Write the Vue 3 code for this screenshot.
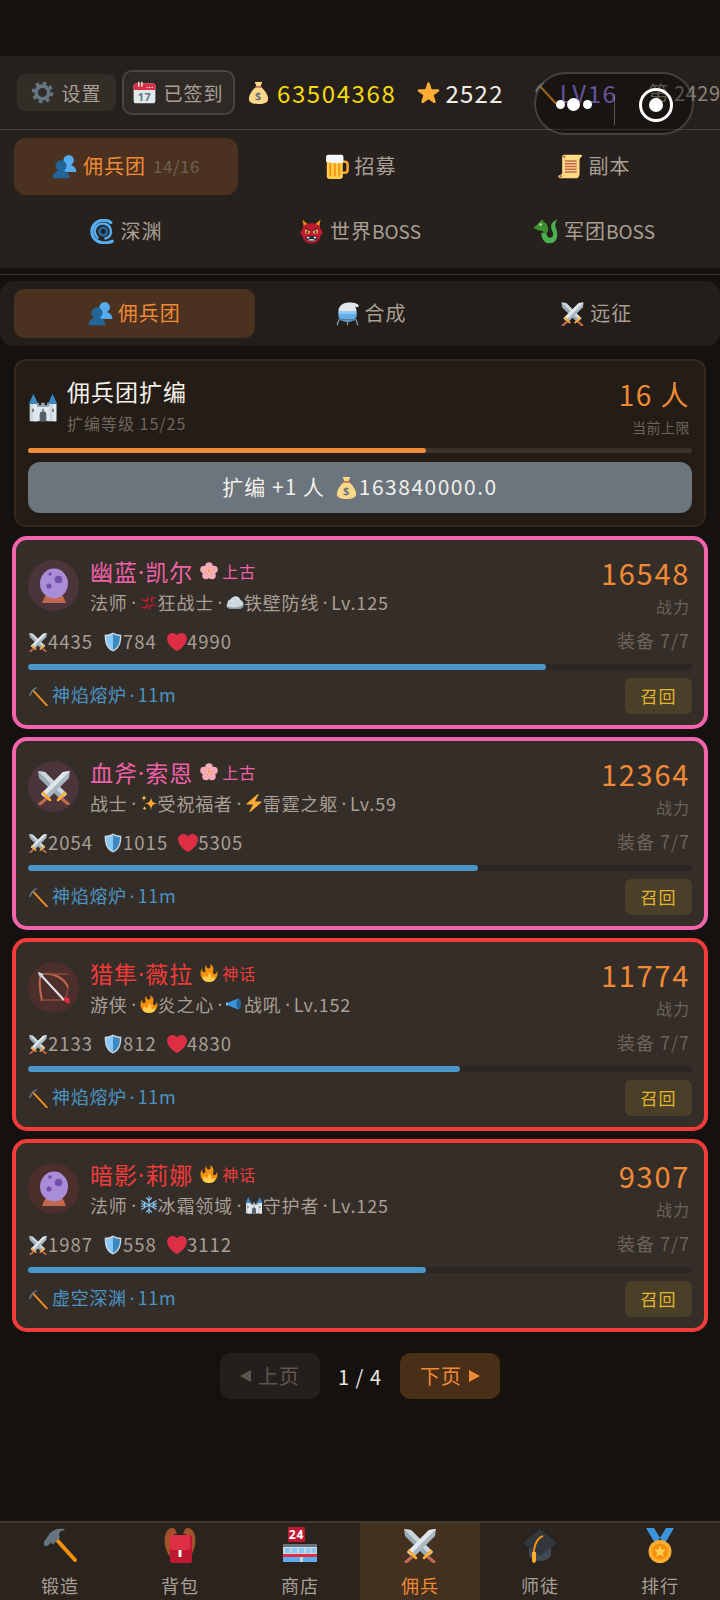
<script setup>
const navTabs = [
  { icon: 'bust', text: '佣兵团', extra: '14/16', active: true },
  { icon: 'beer', text: '招募' },
  { icon: 'scroll', text: '副本' },
  { icon: 'cyclone', text: '深渊' },
  { icon: 'ogre', text: '世界', latin: 'BOSS' },
  { icon: 'dragon', text: '军团', latin: 'BOSS' }
]
const subTabs = [
  { icon: 'bust', text: '佣兵团', active: true },
  { icon: 'flask', text: '合成' },
  { icon: 'swords', text: '远征' }
]
const heroes = [
  { name: '幽蓝·凯尔', tier: 'pink', rarityIcon: 'sakura', rarity: '上古', avatar: 'ball', job: '法师', traits: [['anger', '狂战士'], ['rock', '铁壁防线']], lv: 'Lv.125', power: 16548, atk: 4435, def: 784, hp: 4990, pct: 78, place: '神焰熔炉' },
  { name: '血斧·索恩', tier: 'pink', rarityIcon: 'sakura', rarity: '上古', avatar: 'swords', job: '战士', traits: [['sparkles', '受祝福者'], ['bolt', '雷霆之躯']], lv: 'Lv.59', power: 12364, atk: 2054, def: 1015, hp: 5305, pct: 67.8, place: '神焰熔炉' },
  { name: '猎隼·薇拉', tier: 'red', rarityIcon: 'fire', rarity: '神话', avatar: 'bow', job: '游侠', traits: [['fire', '炎之心'], ['horn', '战吼']], lv: 'Lv.152', power: 11774, atk: 2133, def: 812, hp: 4830, pct: 65, place: '神焰熔炉' },
  { name: '暗影·莉娜', tier: 'red', rarityIcon: 'fire', rarity: '神话', avatar: 'ball', job: '法师', traits: [['snow', '冰霜领域'], ['castle', '守护者']], lv: 'Lv.125', power: 9307, atk: 1987, def: 558, hp: 3112, pct: 60, place: '虚空深渊' }
]
const bottomTabs = [
  { icon: 'hammer', text: '锻造' },
  { icon: 'pack', text: '背包' },
  { icon: 'store', text: '商店' },
  { icon: 'swords', text: '佣兵', active: true },
  { icon: 'cap', text: '师徒' },
  { icon: 'medal', text: '排行' }
]
</script>

<template>
  <div class="app">
    <svg class="sprite" width="0" height="0" aria-hidden="true">
      <defs>
        <g id="gear">
          <circle cx="18" cy="18" r="10" fill="none" stroke="#66757F" stroke-width="6" />
          <circle cx="18" cy="18" r="14.5" fill="none" stroke="#66757F" stroke-width="5" stroke-dasharray="5.6 5.79" />
        </g>
        <g id="calendar">
          <rect x="1" y="4" width="34" height="31" rx="4" fill="#E1E8ED" />
          <path d="M1 14V8a4 4 0 0 1 4-4h26a4 4 0 0 1 4 4v6z" fill="#DD2E44" />
          <path d="M9 1v8M14 1v8" stroke="#F5F8FA" stroke-width="2" />
          <path d="M21 10h2m2 0h2m2 0h2" stroke="#F5F8FA" stroke-width="1.6" />
          <text x="18" y="32" font-size="17" text-anchor="middle" fill="#66757F" font-family="Noto Sans, sans-serif" font-weight="700">17</text>
        </g>
        <g id="money">
          <path d="M18 7C10 11 3 21 3 28c0 5 5 8 15 8s15-3 15-8c0-7-7-17-15-21z" fill="#FDD888" />
          <path d="M12 1c2 1.500 4 0 6 0s4 1.500 6 0l-2.500 7h-7z" fill="#FDD888" />
          <path d="M13 8h10v2.500H13z" fill="#BF6952" />
          <text x="18" y="30" font-size="17" text-anchor="middle" fill="#67757F" font-family="Noto Sans, sans-serif" font-weight="700">$</text>
        </g>
        <path id="star" fill="#FFAC33" d="M27.287 34.627c-.404 0-.806-.124-1.152-.371L18 28.422l-8.135 5.834c-.693.496-1.623.496-2.312-.008-.689-.499-.979-1.385-.721-2.194l3.034-9.792-8.062-5.681c-.685-.505-.97-1.393-.708-2.203.264-.808 1.016-1.357 1.866-1.363L12.947 13l3.179-9.549c.268-.809 1.023-1.353 1.874-1.353.851 0 1.606.545 1.875 1.353L23 13l10.036.015c.853.006 1.606.556 1.867 1.363.263.81-.022 1.698-.708 2.203l-8.062 5.681 3.034 9.792c.26.809-.033 1.695-.72 2.194-.347.254-.753.379-1.16.379z" />
        <g id="pick">
          <path d="M9 8l25 27" stroke="#F19020" stroke-width="3.400" stroke-linecap="round" />
          <path d="M2 17C4 10 8 5 15 2c1 0 1.500 1 1 2C11 7 7 11 5 17c-.5 1.500-3 1.500-3 0z" fill="#66757F" />
        </g>
        <g id="bust">
          <circle cx="24" cy="9" r="7.500" fill="#55ACEE" />
          <path d="M14 26c0-7 4-9 7-10h6c3 1 8 3 8 10z" fill="#55ACEE" />
          <circle cx="13" cy="17" r="8" fill="#226699" />
          <path d="M1 35c0-8 5-10 8-11h8c3 1 8 3 8 11z" fill="#226699" />
        </g>
        <g id="beer">
          <path d="M26 11h4a4 4 0 0 1 4 4v8a4 4 0 0 1-4 4h-4" fill="none" stroke="#FFAC33" stroke-width="3.500" />
          <path d="M4 8h23v24a4 4 0 0 1-4 4H8a4 4 0 0 1-4-4z" fill="#FFCC4D" />
          <path d="M9 14v17M15.500 14v17M22 14v17" stroke="#F4900C" stroke-width="2.500" stroke-linecap="round" />
          <path d="M3 4a3 3 0 0 1 3-3h19a3 3 0 0 1 3 3v7c0 1.500-2 2-3 1-1 2-3 2-4 0-2 2-5 2-6 0-2 2-5 1-6 0H6c-2 0-3-1-3-2z" fill="#F5F8FA" />
        </g>
        <g id="scroll">
          <path d="M9 1h24c2 0 2 2 1 3-2 1-3 3-3 5v20c0 4-3 6-6 6H4c-3 0-4-2-3-4 1-1 4-1 5-3V7c0-4 0-6 3-6z" fill="#FFD983" />
          <circle cx="9" cy="4" r="1.800" fill="#BF6952" />
          <circle cx="4" cy="32" r="1.800" fill="#BF6952" />
          <path d="M10 10h17M10 14h17M10 18h17M10 22h17M10 26h17" stroke="#C1694F" stroke-width="2" />
        </g>
        <g id="cyclone" fill="none" stroke-linecap="round">
          <path d="M30 5C25 1 15 0 8 6 1 12 1 23 7 29c6 6 16 7 25 3" stroke="#55ACEE" stroke-width="4.500" />
          <path d="M11 27c-5-5-6-14 0-18 6-4 15-3 18 4 3 7 0 14-7 15" stroke="#55ACEE" stroke-width="3.500" />
          <circle cx="19" cy="18" r="5.500" stroke="#226699" stroke-width="4" />
        </g>
        <g id="ogre">
          <path d="M7 12L5 1l8 7zM29 12l2-11-8 7z" fill="#F4900C" />
          <path d="M5 15c0-6 6-9 13-9s13 3 13 9c2 1 3 3 3 5s-2 3-3 3c0 7-5 12-13 12S5 30 5 23c-1 0-3-1-3-3s1-4 3-5z" fill="#BE1931" />
          <path d="M9 15l7 3-1 3H9zM27 15l-7 3 1 3h6z" fill="#FFCC4D" />
          <circle cx="12" cy="19" r="1.600" fill="#292F33" /><circle cx="24" cy="19" r="1.600" fill="#292F33" />
          <path d="M9 13l7 3M27 13l-7 3" stroke="#60352A" stroke-width="2" />
          <path d="M9 27c2-2 5-3 9-3s7 1 9 3c-1 4-5 5-9 5s-8-1-9-5z" fill="#292F33" />
          <path d="M11 26l2 3 2-3.500zM25 26l-2 3-2-3.500z M13 31h10l-2-2h-6z" fill="#F5F8FA" />
        </g>
        <g id="dragon">
          <path d="M12 20c0 6 3 15 12 15 8 0 11-6 11-13 0-6-3-9-3-13 0-3 1-5 3-8-5 1-9 5-9 10 0 5 3 7 3 11 0 3-2 5-5 5-3 0-4-3-5-8z" fill="#4CAF50" />
          <path d="M1 11c4 0 5-4 8-6 2-2 3-3 5-5l1 4c3 1 5 3 6 6 1 3 1 6 0 9l-4 2c-2-2-3-4-5-4-3 0-4-1-7-2-2 0-3-2-4-4z" fill="#3E8E2F" />
          <circle cx="11" cy="8" r="1.800" fill="#C6E5B3" />
        </g>
        <g id="flask">
          <path d="M6 26l-3 9M30 26l3 9M18 27v8" stroke="#8899A6" stroke-width="1.800" />
          <path d="M5 15h26v7a11 7 0 0 1-26 0z" fill="#5DADEC" />
          <path d="M5 15h26v4H5z" fill="#88C9F9" />
          <path d="M5 15c0-8 6-13 14-13 6 0 12 0 15 4 1 2-1 3-3 3l-2-1c1 2 2 4 2 7z" fill="#E1E8ED" />
          <path d="M5 27h26" stroke="#66757F" stroke-width="2" />
        </g>
        <g id="swords">
          <path d="M2 2l7 1 22 22-6 6L3 9z" fill="#99AAB5" />
          <path d="M2 2l7 1 22 22-3 3z" fill="#CCD6DD" />
          <path d="M34 2l-7 1L5 25l6 6L33 9z" fill="#AAB8C2" />
          <path d="M34 2l-7 1L5 25l3 3z" fill="#E1E8ED" />
          <path d="M25 29l7 6M11 29l-7 6" stroke="#C1694F" stroke-width="3.200" stroke-linecap="round" />
          <path d="M22 31l7-7M14 31l-7-7" stroke="#FFAC33" stroke-width="2.600" stroke-linecap="round" />
        </g>
        <g id="shield">
          <path d="M18 1C13 4 8 5 3 5c0 13 2 25 15 30 13-5 15-17 15-30-5 0-10-1-15-4z" fill="#CCD6DD" />
          <path d="M18 3.500C14 6 9.500 7 5.500 7.200 5.500 18 8 28 18 32.400z" fill="#88C9F9" />
          <path d="M18 3.500C22 6 26.500 7 30.500 7.200 30.500 18 28 28 18 32.400z" fill="#3B88C3" />
        </g>
        <path id="heart" fill="#DD2E44" d="M35.885 11.833c0-5.450-4.418-9.868-9.867-9.868-3.308 0-6.227 1.633-8.018 4.129-1.791-2.496-4.710-4.129-8.017-4.129-5.450 0-9.868 4.417-9.868 9.868 0 .772.098 1.520.266 2.241C1.751 22.587 11.216 31.568 18 34.034c6.783-2.466 16.249-11.447 17.617-19.959.170-.721.268-1.469.268-2.242z" />
        <g id="castle">
          <path d="M2 14h9v21H2zM25 14h9v21h-9z" fill="#CCD6DD" />
          <path d="M6 14h5v21H6zM29.500 14H34v21h-4.500z" fill="#E1E8ED" />
          <path d="M10 17h16v18H10z" fill="#E1E8ED" />
          <path d="M1 14L6.500 2 12 14zM24 14l5.500-12L35 14z" fill="#3B88C3" />
          <path d="M11 13h2v3h3v-3h4v3h3v-3h2v5H11z" fill="#99AAB5" />
          <path d="M14 35V27a4 4 0 0 1 8 0v8z" fill="#55606B" />
          <path d="M5 20h2v4H5zM29 20h2v4h-2zM17 20h2v3h-2z" fill="#66757F" />
        </g>
        <g id="ball">
          <path d="M9 28h18l3 7H6z" fill="#C1694F" />
          <ellipse cx="18" cy="15.500" rx="14" ry="15" fill="#AA8DD8" />
          <circle cx="22.500" cy="11.500" r="3.800" fill="#744EAA" />
          <circle cx="13" cy="18" r="2.600" fill="#744EAA" />
          <circle cx="14" cy="6" r="1.800" fill="#744EAA" />
        </g>
        <g id="bow" fill="none">
          <path d="M8 4c10-1 20 4 24 13M4 8c-1 8 1 18 2 23" stroke="#C1694F" stroke-width="2" />
          <path d="M8 4h24v0M32 17c-1 7-2 11-3 13H6" stroke="#8F4B38" stroke-width="1.600" />
          <path d="M3 3l25 27" stroke="#E1E8ED" stroke-width="2" />
          <path d="M2 2l6 2-4 4z" fill="#CCD6DD" />
          <path d="M27 27l6 1 1 6-5-2z" fill="#DD2E44" />
        </g>
        <g id="sakura" fill="#F4ABBA">
          <circle cx="18" cy="8" r="7.500" /><circle cx="28" cy="15" r="7.500" /><circle cx="24" cy="27" r="7.500" /><circle cx="12" cy="27" r="7.500" /><circle cx="8" cy="15" r="7.500" />
          <circle cx="18" cy="18" r="5" fill="#FFD983" />
          <path d="M18 18v-7M18 18l6-2M18 18l4 6M18 18l-4 6M18 18l-6-2" stroke="#EA596E" stroke-width="1" />
        </g>
        <g id="fire">
          <path fill="#F4900C" d="M35 19c0-2.062-.367-4.039-1.040-5.868-.460 5.389-3.333 8.157-6.335 6.868-2.812-1.208-.917-5.917-.777-8.164.236-3.809-.012-8.169-6.931-11.794 2.875 5.500.333 8.917-2.333 9.125-2.958.231-5.667-2.542-4.667-7.042-3.238 2.386-3.332 6.402-2.333 9 1.042 2.708-.042 4.958-2.583 5.208-2.840.280-4.418-3.041-2.963-8.333C2.520 10.965 1 14.805 1 19c0 9.389 7.611 17 17 17s17-7.611 17-17z" />
          <path fill="#FFCC4D" d="M28.394 23.999c.148 3.084-2.561 4.293-4.019 3.709-2.106-.843-1.541-2.291-2.083-5.291s-2.625-5.083-5.708-6c2.250 6.333-1.247 8.667-3.080 9.084-1.872.426-3.753-.001-3.968-4.007C7.352 23.668 6 26.676 6 30c0 .340.019.675.047 1.007C9.020 34.667 13.584 36 18 36s8.979-1.333 11.953-4.993c.028-.332.047-.667.047-1.007 0-2.106-.541-4.083-1.606-6.001z" />
        </g>
        <g id="anger" fill="#BE1931">
          <path d="M14 1c2 6 1 10-1 12-2 1-7 0-11-3 4 6 6 8 11 8 4-1 6-7 1-17z" />
          <path d="M35 10c-6 0-9 1-10 3s0 5 3 9c-5-3-8-6-7-10 1-4 7-6 14-2z" />
          <path d="M34 27c-6-2-10-2-12 0s-2 5-1 9c-4-5-4-9-2-11 3-3 9-3 15 2z" />
          <path d="M1 28c5 0 9 0 11-2s2-4 2-8c3 4 3 8 1 11-3 3-8 4-14-1z" />
        </g>
        <g id="rock">
          <path d="M4 30c-3-2-4-7-1-10 0-4 3-7 6-7 2-5 8-8 13-6 4 1 6 4 7 7 4 1 6 5 6 9 0 5-3 8-7 8H9c-2 0-4 0-5-1z" fill="#CCD6DD" />
          <path d="M3 26c6 4 22 5 31-2 0 5-3 8-7 8H8c-2 0-4-3-5-6z" fill="#8899A6" />
          <path d="M10 14c3 0 5 1 6 3M20 9c2 1 4 3 4 6" stroke="#F5F8FA" stroke-width="2" fill="none" />
        </g>
        <g id="sparkles" fill="#FFAC33">
          <path d="M22 6c1 9 4 12 13 13-9 1-12 4-13 14-1-10-4-13-13-14 9-1 12-4 13-13z" />
          <path d="M8 2c.5 4 2 5.500 6 6-4 .5-5.500 2-6 6-.5-4-2-5.500-6-6 4-.5 5.500-2 6-6z" fill="#FFCC4D" />
          <path d="M9 24c.4 3 1.500 4 4.500 4.500-3 .5-4 1.500-4.500 4.500-.5-3-1.500-4-4.500-4.500 3-.5 4-1.500 4.500-4.500z" fill="#FFCC4D" />
        </g>
        <path id="bolt" fill="#FFAC33" d="M32.938 15.651C32.792 15.260 32.418 15 32 15H19.925L26.890 1.458c.219-.426.106-.947-.271-1.245C26.437.071 26.218 0 26 0c-.233 0-.466.082-.653.243L18 6.588 3.347 19.243c-.316.273-.430.714-.284 1.105S3.582 21 4 21h12.075L9.110 34.542c-.219.426-.106.947.271 1.245.182.142.401.213.619.213.233 0 .466-.082.653-.243L18 29.412l14.653-12.655c.317-.273.430-.714.285-1.106z" />
        <g id="horn">
          <path d="M2 16l22-9v22L2 20z" fill="#3B94D9" />
          <path d="M24 7c4 0 6 5 6 11s-2 11-6 11c-2-3-3-7-3-11s1-8 3-11z" fill="#226699" />
          <path d="M0 15h3v6H0z" fill="#88C9F9" />
        </g>
        <g id="snow" stroke="#88C9F9" stroke-width="2.200" stroke-linecap="round" fill="none">
          <path d="M18 1v34M3.300 9.500l29.400 17M3.300 26.500l29.400-17" />
          <path d="M13 4l5 5 5-5M13 32l5-5 5 5M3 15l7 3-2 6M33 15l-7 3 2 6M3 21l7-3-2-6M33 21l-7-3 2-6" />
        </g>
        <g id="hammer">
          <path d="M14 12l19 21" stroke="#F4900C" stroke-width="4" stroke-linecap="round" />
          <path d="M2 15l6-9c4-4 9-5 14-4 1 .5.500 1.500 0 1.500-3 0-5 2-5 5l1 2-7 7-2-2-3 3c-1 1-3 1-4-.5z" fill="#66757F" />
        </g>
        <g id="pack">
          <path d="M8 30C2 22 1 10 5 4c2-3 6-4 8-2l2 5H12C9 10 10 22 12 30zM28 30c6-8 7-20 3-26-2-3-6-4-8-2l-2 5h3c3 3 2 15 0 23z" fill="#A0522D" />
          <path d="M8 8h20a2 2 0 0 1 2 2v24a2 2 0 0 1-2 2H10a2 2 0 0 1-2-2z" fill="#BE1931" />
          <path d="M8 8h20v12a3 3 0 0 1-3 3H11a3 3 0 0 1-3-3z" fill="#DD2E44" />
          <path d="M16.500 23h3v7h-3z" fill="#F5F8FA" />
        </g>
        <g id="store">
          <rect x="6" y="0" width="17" height="15" rx="1" fill="#BE1931" />
          <text x="14.500" y="12" font-size="12" text-anchor="middle" fill="#fff" font-weight="700" font-family="Noto Sans, sans-serif">24</text>
          <path d="M1 17h34v18H1z" fill="#CCD6DD" />
          <path d="M1 17h34v3H1z" fill="#66757F" />
          <path d="M3 21h5v5H3zM10 21h5v5h-5zM17 21h5v5h-5zM24 21h4v5h-4zM29.500 21H34v5h-4.500z" fill="#88C9F9" />
          <path d="M1 27h34v3H1z" fill="#DD2E44" />
          <path d="M1 30h17v5H1zM21 30h14v5H21z" fill="#5DADEC" />
        </g>
        <g id="cap">
          <path d="M7 19l11 6 11-6v10c-2 3-7 5-11 5s-9-2-11-5z" fill="#3F4A54" />
          <path d="M18 2l17 14-17 13L1 16z" fill="#31373D" />
          <path d="M21 9c-4 1-8 6-9 14v7" fill="none" stroke="#F4900C" stroke-width="2" />
          <path d="M10 25h4v8c0 2-1 3-2 3s-2-1-2-3z" fill="#FFAC33" />
        </g>
        <g id="medal">
          <path d="M4 1h8l8 13-6 4zM32 1h-8l-8 13 6 4z" fill="#3B94D9" />
          <path d="M14 14h8l2 5H12z" fill="#FFAC33" />
          <circle cx="18" cy="24.500" r="11.500" fill="#FFAC33" />
          <circle cx="18" cy="24.500" r="8" fill="#F4900C" />
          <path d="M18 18.500l1.800 4 4.200.3-3.200 2.700 1 4.200-3.800-2.200-3.800 2.200 1-4.200-3.200-2.700 4.200-.3z" fill="#FFCC4D" />
        </g>
      </defs>
    </svg>

    <header class="top">
      <div class="tool"><svg class="ic i23" viewBox="0 0 36 36"><use href="#gear" /></svg>设置</div>
      <div class="tool signed"><svg class="ic i23" viewBox="0 0 36 36"><use href="#calendar" /></svg>已签到</div>
      <div class="stat money"><svg class="ic i23" viewBox="0 0 36 36"><use href="#money" /></svg><span class="gold">63504368</span></div>
      <div class="stat stars"><svg class="ic i23" viewBox="0 0 36 36"><use href="#star" /></svg><span class="white">2522</span></div>
      <div class="stat lvl"><svg class="ic i23" viewBox="0 0 36 36"><use href="#pick" /></svg><span class="purple">LV16</span></div>
      <div class="stat rank"><span class="grey">第</span><span class="grey">2429</span></div>
    </header>

    <div class="capsule">
      <span class="dot"></span><span class="dot big"></span><span class="dot"></span>
      <span class="divider"></span>
      <span class="target"><span class="core"></span></span>
    </div>

    <nav class="nav">
      <div v-for="t in navTabs" :key="t.text" class="nav-tab" :class="{ on: t.active }">
        <svg class="ic i25" viewBox="0 0 36 36"><use :href="'#' + t.icon" /></svg>
        <span class="lift">{{ t.text }}<b v-if="t.latin" class="latin">{{ t.latin }}</b></span>
        <span v-if="t.extra" class="extra lift">{{ t.extra }}</span>
      </div>
    </nav>

    <div class="sub-wrap">
      <div class="sub">
        <div v-for="t in subTabs" :key="t.text" class="sub-tab" :class="{ on: t.active }">
          <svg class="ic i25" viewBox="0 0 36 36"><use :href="'#' + t.icon" /></svg>
          <span class="lift">{{ t.text }}</span>
        </div>
      </div>
    </div>

    <section class="expand">
      <div class="ex-head">
        <svg class="ic i30" viewBox="0 0 36 36"><use href="#castle" /></svg>
        <div class="ex-info">
          <div class="ex-title">佣兵团扩编</div>
          <div class="ex-sub">扩编等级 15/25</div>
        </div>
        <div class="ex-right">
          <div class="ex-num">16 人</div>
          <div class="ex-cap">当前上限</div>
        </div>
      </div>
      <div class="ex-bar"><div class="ex-fill"></div></div>
      <div class="ex-btn"><span class="lift2 lead">扩编 +1 人 </span><svg class="ic i23" viewBox="0 0 36 36"><use href="#money" /></svg><span class="lift2 cost">163840000.0</span></div>
    </section>

    <section class="list">
      <article v-for="h in heroes" :key="h.name" class="hero" :class="h.tier">
        <div class="head">
          <div class="avatar"><svg class="ic i36" viewBox="0 0 36 36"><use :href="'#' + h.avatar" /></svg></div>
          <div class="info">
            <div class="name-row">
              <span class="name">{{ h.name.split('·')[0] }}<i class="ndot">·</i>{{ h.name.split('·')[1] }}</span>
              <svg class="ic i18 rar-ic" viewBox="0 0 36 36"><use :href="'#' + h.rarityIcon" /></svg>
              <span class="rarity">{{ h.rarity }}</span>
            </div>
            <div class="desc">
              <span>{{ h.job }}</span><i class="sep">·</i>
              <template v-for="tr in h.traits" :key="tr[1]">
                <svg class="ic i18" viewBox="0 0 36 36"><use :href="'#' + tr[0]" /></svg><span>{{ tr[1] }}</span><i class="sep">·</i>
              </template>
              <span>{{ h.lv }}</span>
            </div>
          </div>
          <div class="power">
            <div class="p-num">{{ h.power }}</div>
            <div class="p-lab">战力</div>
          </div>
        </div>
        <div class="stats">
          <svg class="ic i20" viewBox="0 0 36 36"><use href="#swords" /></svg><span class="lift">{{ h.atk }}</span>
          <svg class="ic i20 gapl" viewBox="0 0 36 36"><use href="#shield" /></svg><span class="lift">{{ h.def }}</span>
          <svg class="ic i20 gapl" viewBox="0 0 36 36"><use href="#heart" /></svg><span class="lift">{{ h.hp }}</span>
          <span class="gear lift2">装备 7/7</span>
        </div>
        <div class="bar"><div class="fill" :style="{ width: h.pct + '%' }"></div></div>
        <div class="foot">
          <svg class="ic i20" viewBox="0 0 36 36"><use href="#pick" /></svg>
          <span class="place lift2">{{ h.place }}<i class="sep2">·</i>11m</span>
          <div class="recall"><span class="lift">召回</span></div>
        </div>
      </article>
    </section>

    <div class="pager">
      <div class="pg prev"><span class="tri left"></span><span class="lift">上页</span></div>
      <div class="pg-num"><span class="lift">1 / 4</span></div>
      <div class="pg next"><span class="lift">下页</span><span class="tri right"></span></div>
    </div>

    <footer class="bottom">
      <div v-for="t in bottomTabs" :key="t.text" class="b-tab" :class="{ on: t.active }">
        <svg class="ic i36" viewBox="0 0 36 36"><use :href="'#' + t.icon" /></svg>
        <span>{{ t.text }}</span>
      </div>
    </footer>
  </div>
</template>

<style scoped>
.app, .app * { box-sizing: border-box; }
.app {
  position: relative;
  width: 720px;
  height: 1600px;
  padding-top: 56px;
  display: flex;
  flex-direction: column;
  overflow: hidden;
  background: #14110e;
  font-family: "Noto Sans CJK SC", "Noto Sans", sans-serif;
  letter-spacing: 1px;
  color: #a89f95;
}
.sprite { position: absolute; }
.ic { display: block; flex: none; }
.i18 { width: 18px; height: 18px; }
.i20 { width: 20px; height: 20px; }
.i23 { width: 23px; height: 23px; }
.i25 { width: 25px; height: 25px; }
.i30 { width: 30px; height: 30px; }
.i36 { width: 36px; height: 36px; }
.lift { padding-bottom: 2px; }
.lift2 { padding-bottom: 4px; }

.top {
  height: 74px;
  flex: none;
  display: flex;
  align-items: center;
  padding-left: 17px;
  background: #26201c;
  border-bottom: 1px solid #4a443e;
  overflow: hidden;
  white-space: nowrap;
}
.tool {
  flex: none;
  height: 37px;
  width: 99px;
  display: flex;
  align-items: center;
  justify-content: center;
  gap: 7px;
  font-size: 19px;
  border-radius: 8px;
  background: #332d28;
}
.signed {
  width: 113px;
  height: 45px;
  margin-left: 6px;
  background: #2f2925;
  border: 2px solid #4a443e;
  border-radius: 10px;
}
.stat { flex: none; display: flex; align-items: center; font-size: 24px; }
.money { margin-left: 12px; gap: 7px; letter-spacing: 1.600px; }
.stars { margin-left: 21px; gap: 5px; letter-spacing: 1.300px; }
.lvl { margin-left: 30px; gap: 3px; letter-spacing: 1.500px; }
.rank { margin-left: 31px; gap: 5px; font-size: 20px; letter-spacing: .6px; }
.gold { color: #f5d90a; }
.white { color: #f0ece6; }
.purple { color: #9b7fe8; }
.grey { color: #8d857b; }

.capsule {
  position: absolute;
  left: 534px;
  top: 72px;
  width: 160px;
  height: 63px;
  border-radius: 32px;
  background: rgba(0, 0, 0, 0.35);
  border: 2px solid rgba(255, 255, 255, 0.18);
}
.dot {
  position: absolute;
  left: 20px;
  top: 26px;
  width: 9px;
  height: 9px;
  border-radius: 50%;
  background: #fff;
}
.dot.big { left: 31px; top: 24px; width: 13px; height: 13px; }
.dot + .dot + .dot { left: 47px; }
.divider {
  position: absolute;
  left: 78px;
  top: 20px;
  width: 1px;
  height: 31px;
  background: rgba(255, 255, 255, 0.3);
}
.target {
  position: absolute;
  left: 103px;
  top: 14px;
  width: 34px;
  height: 34px;
  border: 3.500px solid #fff;
  border-radius: 50%;
  display: flex;
  align-items: center;
  justify-content: center;
}
.core { width: 14px; height: 14px; border-radius: 50%; background: #fff; }

.nav {
  flex: none;
  height: 138px;
  padding: 8px 14px;
  display: grid;
  grid-template-columns: repeat(3, 1fr);
  grid-auto-rows: 57px;
  column-gap: 10px;
  row-gap: 8px;
  background: #27211d;
}
.nav-tab {
  display: flex;
  align-items: center;
  justify-content: center;
  gap: 6px;
  font-size: 20px;
  border-radius: 12px;
}
.nav-tab.on { background: #4a3120; color: #f08a35; }
.latin { font-weight: 400; font-size: 19px; letter-spacing: 0; }
.extra { font-size: 17px; color: #6d6155; letter-spacing: .5px; margin-left: 1px; }

.sub-wrap {
  flex: none;
  margin-top: 6px;
  border-top: 1px solid #38322d;
  padding-top: 6px;
}
.sub {
  display: flex;
  gap: 6px;
  padding: 8px 14px;
  height: 65px;
  background: #231e1a;
  border-radius: 14px;
}
.sub-tab {
  flex: 1 1 auto;
  display: flex;
  align-items: center;
  justify-content: center;
  gap: 5px;
  font-size: 20px;
  border-radius: 10px;
}
.sub-tab.on { background: #4a3120; color: #f08a35; }

.expand {
  flex: none;
  margin: 13px 14px 0;
  height: 168px;
  padding: 17px 12px 0;
  background: #241c16;
  border: 2px solid #35281e;
  border-radius: 12px;
}
.ex-head { height: 58px; display: flex; align-items: center; }
.ex-info { margin-left: 9px; flex: 1; align-self: flex-start; }
.ex-title { font-size: 23px; line-height: 27px; color: #f5f1ea; }
.ex-sub { margin-top: 8px; font-size: 16px; line-height: 20px; color: #6f675e; }
.ex-right { text-align: right; padding-right: 2px; }
.ex-num { font-size: 28px; line-height: 32px; color: #f08a35; letter-spacing: 1.500px; }
.ex-cap { margin-top: 7px; font-size: 14px; line-height: 20px; letter-spacing: .5px; color: #6b6359; }
.ex-bar { margin-top: 12px; height: 5px; border-radius: 3px; background: #3a332d; }
.ex-fill { width: 60%; height: 100%; border-radius: 3px; background: #f08c37; }
.ex-btn {
  margin-top: 9px;
  height: 51px;
  display: flex;
  align-items: center;
  justify-content: center;
  gap: 1px;
  font-size: 21px;
  color: #f0efe9;
  background: #6c757d;
  border-radius: 12px;
  white-space: pre;
}
.lead { margin-right: 3px; }
.cost { letter-spacing: 1.500px; }

.list {
  flex: none;
  margin: 9px 12px 0;
  display: flex;
  flex-direction: column;
  gap: 8px;
}
.hero {
  height: 193px;
  padding: 20px 12px 0;
  background: #352d28;
  border: 4px solid;
  border-radius: 15px;
}
.hero.pink { border-color: #f464ac; --tier: #f062a8; --tint: #4c353a; }
.hero.red { border-color: #f23b3b; --tier: #f23b3b; --tint: #4c2f2b; }
.head { height: 51px; display: flex; }
.avatar {
  flex: none;
  width: 51px;
  height: 51px;
  border-radius: 50%;
  background: var(--tint);
  display: flex;
  align-items: center;
  justify-content: center;
}
.info { flex: 1; margin-left: 11px; }
.name-row { height: 22px; display: flex; align-items: center; }
.name { font-size: 23px; color: var(--tier); }
.ndot, .sep, .sep2 { font-family: "Noto Sans", sans-serif; font-style: normal; }
.rar-ic { margin-left: 7px; }
.rarity { margin-left: 4px; font-size: 16px; color: var(--tier); }
.desc { margin-top: 8px; height: 24px; display: flex; align-items: center; font-size: 18px; white-space: nowrap; letter-spacing: .8px; }
.sep { width: 12px; text-align: center; letter-spacing: 0; }
.power { text-align: right; padding-right: 2px; }
.p-num { font-size: 29px; line-height: 24px; color: #f08a35; letter-spacing: 1.700px; }
.p-lab { margin-top: 12px; font-size: 16px; line-height: 20px; color: #6b6359; }
.stats { margin-top: 19px; height: 24px; display: flex; align-items: center; font-size: 18.500px; }
.gapl { margin-left: 10px; }
.gear { margin-left: auto; font-size: 18px; color: #6b6359; padding-right: 2px; }
.bar { margin-top: 10px; height: 6px; border-radius: 3px; background: #2c2622; }
.fill { height: 100%; border-radius: 3px; background: #4a96c9; }
.foot { margin-top: 8px; height: 36px; display: flex; align-items: center; gap: 4px; }
.place { font-size: 18px; letter-spacing: .7px; color: #4a94c4; }
.sep2 { margin: 0 3px; letter-spacing: 0; }
.recall {
  margin-left: auto;
  width: 67px;
  height: 36px;
  display: flex;
  align-items: center;
  justify-content: center;
  font-size: 17px;
  color: #e2b52c;
  background: #4a3f28;
  border-radius: 6px;
}

.pager {
  flex: none;
  margin-top: 21px;
  height: 46px;
  display: flex;
  justify-content: center;
  align-items: center;
  gap: 18px;
}
.pg {
  width: 100px;
  height: 46px;
  display: flex;
  align-items: center;
  justify-content: center;
  gap: 7px;
  font-size: 20px;
  border-radius: 10px;
}
.prev { background: #241f1b; color: #5f574e; }
.next { background: #4a2f18; color: #f08a35; }
.pg-num { font-size: 20px; color: #ece8e2; }
.tri { width: 0; height: 0; border-top: 6.500px solid transparent; border-bottom: 6.500px solid transparent; }
.tri.left { border-right: 11px solid #5f574e; }
.tri.right { border-left: 11px solid #f08a35; }

.bottom {
  margin-top: auto;
  flex: none;
  height: 79px;
  display: grid;
  grid-template-columns: repeat(6, 1fr);
  background: #2a231e;
  border-top: 2px solid #44392f;
}
.b-tab {
  display: flex;
  flex-direction: column;
  align-items: center;
  padding-top: 4px;
  font-size: 18px;
  line-height: 24px;
}
.b-tab span { margin-top: 10px; }
.b-tab.on { background: #43301f; color: #f08a35; }
</style>

<style>
html, body { margin: 0; background: #14110e; }
</style>
